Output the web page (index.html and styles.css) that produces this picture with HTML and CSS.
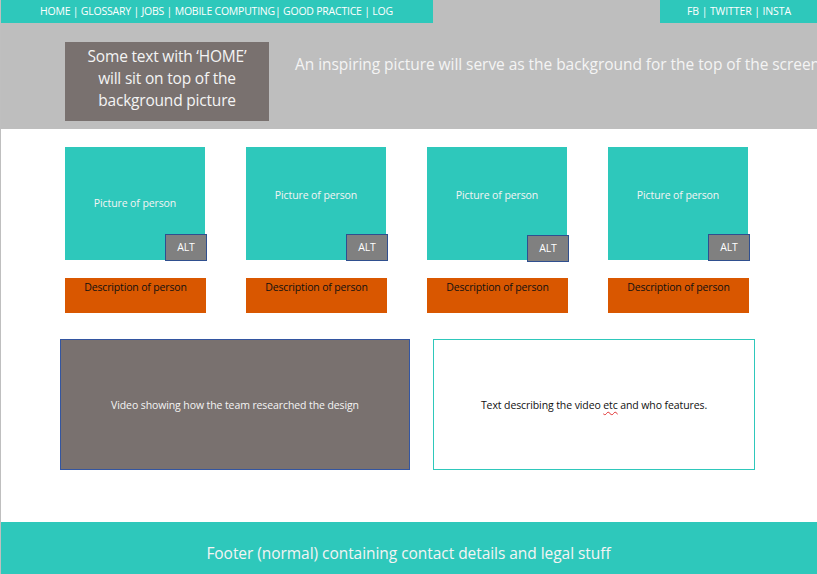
FILE: index.html
```html
<!DOCTYPE html>
<html>
<head>
<meta charset="utf-8">
<link rel="stylesheet" href="styles.css">
</head>
<body>
<div class="page">
  <header class="top">
    <div class="bar">
      <nav class="nav">HOME | GLOSSARY | JOBS | MOBILE COMPUTING| GOOD PRACTICE | LOG</nav>
      <div class="social">FB | TWITTER | INSTA</div>
    </div>
    <div class="hero">
      <div class="hero-box">Some text with ‘HOME’ will sit on top of the background picture</div>
      <div class="hero-text">An inspiring picture will serve as the background for the top of the screen</div>
    </div>
  </header>
  <main class="content">
    <section class="cards">
      <div class="card">
        <div class="pic pic-mid">Picture of person<span class="alt">ALT</span></div>
        <div class="desc">Description of person</div>
      </div>
      <div class="card">
        <div class="pic">Picture of person<span class="alt">ALT</span></div>
        <div class="desc">Description of person</div>
      </div>
      <div class="card">
        <div class="pic">Picture of person<span class="alt alt-low">ALT</span></div>
        <div class="desc">Description of person</div>
      </div>
      <div class="card">
        <div class="pic">Picture of person<span class="alt">ALT</span></div>
        <div class="desc">Description of person</div>
      </div>
    </section>
    <section class="media">
      <div class="video"><p class="media-text">Video showing how the team researched the design</p></div>
      <div class="about"><p class="media-text">Text describing the video <span class="spell">etc</span> and who features.</p></div>
    </section>
  </main>
  <footer class="footer">Footer (normal) containing contact details and legal stuff</footer>
</div>
</body>
</html>
```
FILE: styles.css
```css
* { box-sizing: border-box; }
html, body { margin: 0; padding: 0; background: #ffffff; }
body { font-family: "Open Sans", "Liberation Sans", sans-serif; }
.page {
  width: 817px;
  height: 574px;
  overflow: hidden;
  border-left: 1px solid #bfbfbf;
  display: flex;
  flex-direction: column;
}
.top {
  background: #bebebe;
  height: 129px;
  margin-left: -1px;
}
.bar {
  display: flex;
  justify-content: space-between;
  height: 23px;
}
.nav, .social {
  background: #2ec8bb;
  color: #ffffff;
  font-size: 10.5px;
  line-height: 23px;
}
.nav { width: 433px; padding-left: 40px; letter-spacing: -0.22px; }
.social { width: 157px; padding-left: 27px; letter-spacing: -0.1px; }
.hero {
  display: flex;
  align-items: flex-start;
  padding-left: 65px;
  margin-top: 19px;
  white-space: nowrap;
}
.hero-box {
  flex-shrink: 0;
  width: 204px;
  height: 79px;
  background: #79716f;
  color: #f4f4f4;
  font-size: 15.5px;
  line-height: 22px;
  text-align: center;
  white-space: normal;
  padding: 3px 12px 0;
  letter-spacing: -0.2px;
}
.hero-text {
  color: #f4f4f4;
  font-size: 15.5px;
  margin-left: 26px;
  margin-top: 11px;
  letter-spacing: -0.05px;
}
.content {
  flex: 1;
  padding-top: 18px;
}
.cards {
  display: flex;
  gap: 40px;
  padding-left: 64px;
}
.card { width: 141px; }
.pic {
  position: relative;
  width: 140px;
  height: 113px;
  background: #2ec8bb;
  color: #f4f4f4;
  font-size: 10.5px;
  text-align: center;
  padding-top: 41px;
  letter-spacing: -0.1px;
}
.pic-mid { padding-top: 49px; }
.alt {
  position: absolute;
  right: -2px;
  bottom: -1px;
  width: 42px;
  height: 27px;
  background: #808080;
  border: 1px solid #2f4f8f;
  color: #ffffff;
  font-size: 10.5px;
  line-height: 25px;
  text-align: center;
}
.alt-low { bottom: -2px; }
.desc {
  margin-top: 18px;
  width: 141px;
  height: 35px;
  background: #d95700;
  color: #111111;
  font-size: 10.5px;
  text-align: center;
  padding-top: 2px;
  letter-spacing: -0.15px;
}
.media {
  display: flex;
  gap: 23px;
  padding-left: 59px;
  margin-top: 26px;
}
.video, .about {
  height: 131px;
  display: flex;
  align-items: center;
  justify-content: center;
  font-size: 10.5px;
  letter-spacing: -0.1px;
}
.media-text { margin: 0; }
.video {
  width: 350px;
  background: #79716f;
  border: 1px solid #3355a0;
  color: #f4f4f4;
}
.about {
  width: 322px;
  border: 1px solid #2ec8bb;
  color: #111111;
}
.spell {
  text-decoration: underline wavy #e03030;
  text-decoration-thickness: 1px;
  text-underline-offset: 2px;
}
.footer {
  height: 52px;
  margin-left: -1px;
  background: #2ec8bb;
  color: #f4f4f4;
  font-size: 15.5px;
  text-align: center;
  padding-top: 20px;
  letter-spacing: -0.05px;
}
```
